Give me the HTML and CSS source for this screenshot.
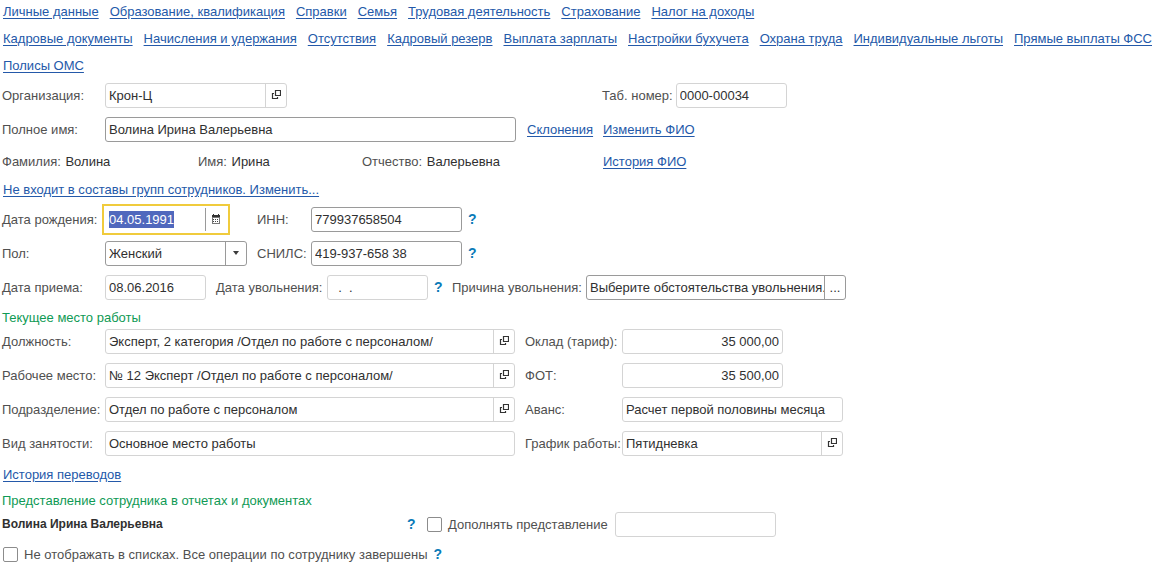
FILE: index.html
```html
<!DOCTYPE html>
<html lang="ru">
<head>
<meta charset="utf-8">
<title>Волина Ирина Валерьевна</title>
<link rel="stylesheet" href="styles.css">
</head>
<body>
<svg class="sprite" aria-hidden="true">
  <symbol id="open" viewBox="0 0 10 10"><path d="M4.500 .5h5v5h-5zM3 3.500H1.500v5h5V7" fill="none" stroke="#333" stroke-width="1.200"/></symbol>
  <symbol id="calendar" viewBox="0 0 10 10"><path d="M2 0h1v1h4V0h1v1h1v9H1V1h1z" fill="#777"/><path d="M1 1h1V0h1v1h4V0h1v1h1v2H1z" fill="#333"/><path d="M2 4h6v5H2z" fill="#fff"/><path d="M2 5h1v1H2zM4 5h1v1H4zM6 5h1v1H6zM2 7h1v1H2zM4 7h1v1H4zM6 7h1v1H6z" fill="#444"/></symbol>
</svg>
<nav class="nav">
  <div class="nav-row">
    <a href="#">Личные данные</a>
    <a href="#">Образование, квалификация</a>
    <a href="#">Справки</a>
    <a href="#">Семья</a>
    <a href="#">Трудовая деятельность</a>
    <a href="#">Страхование</a>
    <a href="#">Налог на доходы</a>
  </div>
  <div class="nav-row">
    <a href="#">Кадровые документы</a>
    <a href="#">Начисления и удержания</a>
    <a href="#">Отсутствия</a>
    <a href="#">Кадровый резерв</a>
    <a href="#">Выплата зарплаты</a>
    <a href="#">Настройки бухучета</a>
    <a href="#">Охрана труда</a>
    <a href="#">Индивидуальные льготы</a>
    <a href="#">Прямые выплаты ФСС</a>
    <a href="#">Полисы ОМС</a>
  </div>
</nav>
<form class="form">
  <section class="identity">
    <label for="org">Организация:</label>
    <div class="field w-org"><input id="org" value="Крон-Ц" readonly><button type="button" aria-label="Открыть организацию"><svg class="icon"><use href="#open"/></svg></button></div>
    <div class="number">
      <label for="tab">Таб. номер:</label>
      <div class="field w-number"><input id="tab" value="0000-00034" readonly></div>
    </div>

    <label for="fullname">Полное имя:</label>
    <div class="field strong w-name"><input id="fullname" value="Волина Ирина Валерьевна"></div>
    <a href="#">Склонения</a>
    <a href="#">Изменить ФИО</a>
  </section>
  <section class="names">
    <p>Фамилия: <span class="value">Волина</span></p>
    <p>Имя: <span class="value">Ирина</span></p>
    <p>Отчество: <span class="value">Валерьевна</span></p>
    <a href="#">История ФИО</a>
  </section>
  <p class="groups"><a href="#">Не входит в составы групп сотрудников. Изменить...</a></p>

  <section class="personal">
    <label for="birth">Дата рождения:</label>
    <div class="field focused w-birth"><input id="birth" value="04.05.1991"><button type="button" aria-label="Календарь"><svg class="icon"><use href="#calendar"/></svg></button></div>
    <label for="inn">ИНН:</label>
    <div class="field strong"><input id="inn" value="779937658504"></div>
    <button type="button" class="help">?</button>

    <label for="sex">Пол:</label>
    <div class="select w-sex">
      <select id="sex"><option>Женский</option><option>Мужской</option></select>
      <span class="arrow"><svg width="6" height="4" viewBox="0 0 6 4"><path d="M0 0h6L3 4z" fill="#3c3c3c"/></svg></span>
    </div>
    <label for="snils">СНИЛС:</label>
    <div class="field strong"><input id="snils" value="419-937-658 38"></div>
    <button type="button" class="help">?</button>
  </section>
  <section class="dates">
    <label for="hired">Дата приема:</label>
    <div class="field"><input id="hired" value="08.06.2016" readonly></div>
    <label for="fired">Дата увольнения:</label>
    <div class="field"><input id="fired" value="  .  ." readonly></div>
    <button type="button" class="help">?</button>
    <label for="reason">Причина увольнения:</label>
    <div class="field strong"><input id="reason" value="Выберите обстоятельства увольнения."><button type="button" aria-label="Выбрать">...</button></div>
  </section>

  <h2 class="h-job">Текущее место работы</h2>
  <section class="job">
    <label for="post">Должность:</label>
    <div class="field"><input id="post" value="Эксперт, 2 категория /Отдел по работе с персоналом/" readonly><button type="button" aria-label="Открыть должность"><svg class="icon"><use href="#open"/></svg></button></div>
    <label for="salary">Оклад (тариф):</label>
    <div class="field money"><input id="salary" value="35 000,00" readonly></div>

    <label for="place">Рабочее место:</label>
    <div class="field"><input id="place" value="№ 12 Эксперт /Отдел по работе с персоналом/" readonly><button type="button" aria-label="Открыть рабочее место"><svg class="icon"><use href="#open"/></svg></button></div>
    <label for="fot">ФОТ:</label>
    <div class="field money"><input id="fot" value="35 500,00" readonly></div>

    <label for="dept">Подразделение:</label>
    <div class="field"><input id="dept" value="Отдел по работе с персоналом" readonly><button type="button" aria-label="Открыть подразделение"><svg class="icon"><use href="#open"/></svg></button></div>
    <label for="advance">Аванс:</label>
    <div class="field"><input id="advance" value="Расчет первой половины месяца" readonly></div>

    <label for="kind">Вид занятости:</label>
    <div class="field"><input id="kind" value="Основное место работы" readonly></div>
    <label for="schedule">График работы:</label>
    <div class="field"><input id="schedule" value="Пятидневка" readonly><button type="button" aria-label="Открыть график"><svg class="icon"><use href="#open"/></svg></button></div>
  </section>
  <p class="history"><a href="#">История переводов</a></p>

  <h2 class="h-view">Представление сотрудника в отчетах и документах</h2>
  <section class="view">
    <strong>Волина Ирина Валерьевна</strong>
    <button type="button" class="help">?</button>
    <label class="check"><input type="checkbox">Дополнять представление</label>
    <div class="field w-extra"><input aria-label="Дополнение представления" readonly></div>
  </section>
  <section class="hide">
    <label class="check"><input type="checkbox">Не отображать в списках. Все операции по сотруднику завершены</label>
    <button type="button" class="help">?</button>
  </section>
</form>
<script src="script.js"></script>
</body>
</html>
```

FILE: styles.css
```css
* { box-sizing: border-box; }
body {
  margin: 0;
  background: #fff;
  color: #505050;
  font: 13px/17px "Liberation Sans", Arial, sans-serif;
}
p, h2 { margin: 0; }
input, select, button { font: inherit; color: #303030; }
label { white-space: nowrap; }
a { color: #2459a9; text-underline-offset: 2px; justify-self: start; }
.sprite { display: none; }
.icon { width: 10px; height: 10px; display: block; }

.nav { display: grid; gap: 10px; padding: 3px 0 0 3px; }
.nav-row { display: flex; flex-wrap: wrap; gap: 10px 11px; white-space: nowrap; }

.form { padding: 9px 0 16px 2px; }

.field {
  display: flex;
  height: 25px;
  border: 1px solid #d4d4d4;
  border-radius: 3px;
}
.field input {
  flex: 1;
  min-width: 0;
  width: 100%;
  border: 0;
  padding: 0 0 0 3px;
  background: none;
  outline: none;
}
.field button {
  flex: none;
  display: grid;
  place-items: center;
  width: 21px;
  border: 0;
  border-left: 1px solid #d4d4d4;
  padding: 0 0 1px;
  background: none;
}
.strong, .strong button { border-color: #9a9a9a; }
.focused { border-color: transparent; border-radius: 0; outline: 2px solid #f0cb3c; outline-offset: 1px; }
.focused button { border-color: #9a9a9a; }
.field input::selection { background: #5068bd; color: #fff; }
.field.money input { text-align: right; padding-right: 3px; }

.select { display: grid; grid-template-columns: 1fr 22px; height: 25px; }
.select select {
  grid-area: 1 / 1 / 2 / 3;
  appearance: none;
  border: 1px solid #9a9a9a;
  border-radius: 3px;
  padding: 0 3px;
  background: none;
}
.arrow {
  grid-area: 1 / 2;
  display: grid;
  place-items: center;
  border-left: 1px solid #9a9a9a;
  margin: 1px 0;
  padding: 0 2px 2px 0;
  pointer-events: none;
}

.help {
  border: 0;
  padding: 0;
  background: none;
  color: #0b7bb8;
  font-size: 14px;
  font-weight: bold;
  width: 8px;
}

.w-org { width: 182px; }
.w-number { width: 111px; }
.w-name { width: 411px; }
.w-birth { width: 122px; }
.w-sex { width: 142px; }
.w-extra { width: 161px; }

.identity, .personal, .dates, .job { display: grid; align-items: center; row-gap: 9px; }
.identity { grid-template-columns: 103px 422px 76px auto; }
.number { grid-column: 3 / 5; display: flex; align-items: center; gap: 3px; padding-left: 75px; }
.names { display: grid; grid-template-columns: 196px 164px 241px auto; padding-top: 11px; }
.names .value { color: #303030; margin-left: 1px; }
.groups { padding: 11px 0 0 1px; }
.personal { grid-template-columns: 103px 152px 54px 151px auto; padding-top: 9px; }
.personal .help { margin-left: 6px; }
.dates { grid-template-columns: 103px 101px 121px 101px 24px 134px 260px; padding-top: 9px; }
.dates label:nth-of-type(2) { padding-left: 10px; }
.dates .help { margin-left: 6px; }

h2 { font-size: 13px; font-weight: normal; color: #0f9a55; }
.h-job { padding: 9px 0 3px; }
.job { grid-template-columns: 103px 410px 107px 221px; }
.job label:nth-of-type(even) { padding-left: 10px; }
.money { width: 161px; }
.history { padding: 10px 0 0 1px; }
.h-view { padding: 9px 0 3px; }
.view { display: flex; align-items: center; }
.view strong { width: 405px; color: #303030; font-size: 12px; }
.check { display: flex; align-items: center; gap: 6px; }
.check input {
  appearance: none;
  width: 15px;
  height: 15px;
  margin: 0;
  border: 1px solid #8c8c8c;
  border-radius: 2px;
}
.view .check { margin: 0 7px 0 12px; }
.hide { display: flex; gap: 6px; padding: 9px 0 0 1px; }
```

FILE: script.js
```js
const birth = document.getElementById('birth');
birth.focus();
birth.select();
```
